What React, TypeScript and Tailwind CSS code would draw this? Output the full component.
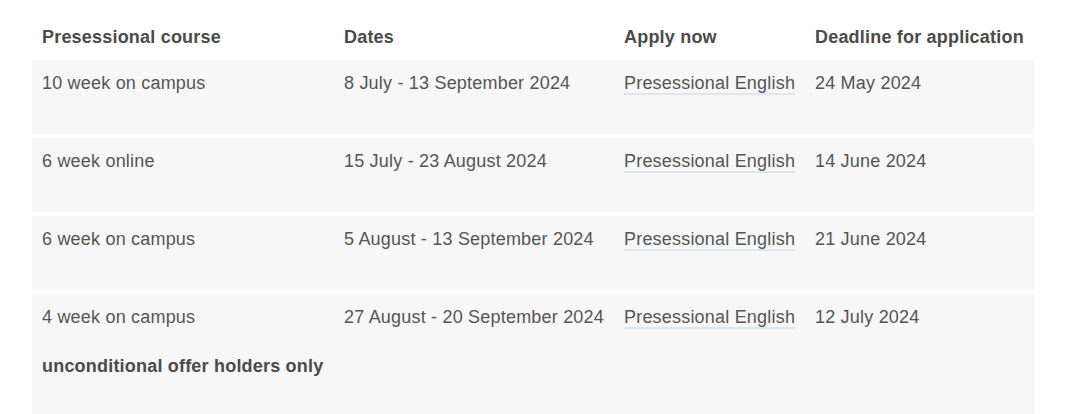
import React from "react";

const rows = [
  { course: "10 week on campus", dates: "8 July - 13 September 2024", deadline: "24 May 2024" },
  { course: "6 week online", dates: "15 July - 23 August 2024", deadline: "14 June 2024" },
  { course: "6 week on campus", dates: "5 August - 13 September 2024", deadline: "21 June 2024" },
  { course: "4 week on campus", dates: "27 August - 20 September 2024", deadline: "12 July 2024", note: "unconditional offer holders only" },
];

const cols = "grid w-[1002px] grid-cols-[302px_280px_191px_229px]";

export default function App() {
  return (
    <div
      className="w-[1080px] h-[414px] overflow-hidden bg-white pl-[32px] text-[18px] tracking-[0.2px] text-[#555555]"
      style={{ fontFamily: '"Liberation Sans", Arial, sans-serif' }}
    >
      <div className={`${cols} font-bold text-[#4a4a4a] leading-[24px]`}>
        <div className="pl-[10px] pt-[25px] pb-[11px] whitespace-nowrap">Presessional course</div>
        <div className="pl-[10px] pt-[25px] pb-[11px]">Dates</div>
        <div className="pl-[10px] pt-[25px] pb-[11px] whitespace-nowrap">Apply now</div>
        <div className="pl-[10px] pt-[25px] pb-[11px] whitespace-nowrap">Deadline for application</div>
      </div>
      <div className="flex flex-col gap-[4px]">
        {rows.map((r) => (
          <div key={r.course} className={`${cols} bg-[#f7f7f7] leading-[24px]`}>
            <div className="pl-[10px] pt-[11px] pb-[14px]">
              <p className="mb-[25px]">{r.course}</p>
              {r.note && <p className="mb-[25px] font-bold text-[#4a4a4a]">{r.note}</p>}
            </div>
            <div className="pl-[10px] pt-[11px] pb-[14px] whitespace-nowrap">
              <p>{r.dates}</p>
            </div>
            <div className="pl-[10px] pt-[11px] pb-[14px] whitespace-nowrap">
              <p>
                <a href="#" className="border-b-2 border-[#d8e7f0] text-[#555555]">
                  Presessional English
                </a>
              </p>
            </div>
            <div className="pl-[10px] pt-[11px] pb-[14px] whitespace-nowrap">
              <p>{r.deadline}</p>
            </div>
          </div>
        ))}
      </div>
    </div>
  );
}
